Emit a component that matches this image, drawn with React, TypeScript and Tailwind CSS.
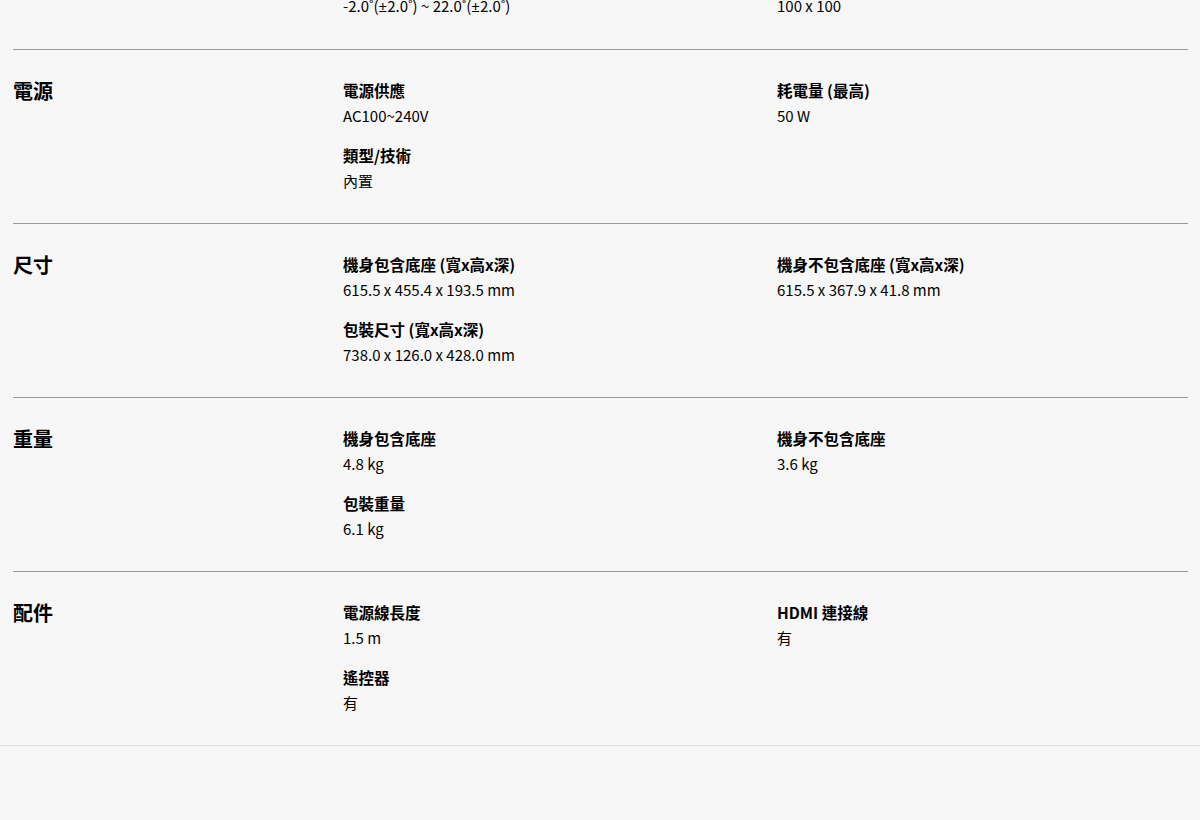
type Item = { label: string; value: string };
type Section = { title: string; items: Item[] };

const SECTIONS: Section[] = [
  {
    title: '電源',
    items: [
      { label: '電源供應', value: 'AC100~240V' },
      { label: '耗電量 (最高)', value: '50 W' },
      { label: '類型/技術', value: '內置' },
    ],
  },
  {
    title: '尺寸',
    items: [
      { label: '機身包含底座 (寬x高x深)', value: '615.5 x 455.4 x 193.5 mm' },
      { label: '機身不包含底座 (寬x高x深)', value: '615.5 x 367.9 x 41.8 mm' },
      { label: '包裝尺寸 (寬x高x深)', value: '738.0 x 126.0 x 428.0 mm' },
    ],
  },
  {
    title: '重量',
    items: [
      { label: '機身包含底座', value: '4.8 kg' },
      { label: '機身不包含底座', value: '3.6 kg' },
      { label: '包裝重量', value: '6.1 kg' },
    ],
  },
  {
    title: '配件',
    items: [
      { label: '電源線長度', value: '1.5 m' },
      { label: 'HDMI 連接線', value: '有' },
      { label: '遙控器', value: '有' },
    ],
  },
];

const font = "font-['Noto_Sans_CJK_TC','Noto_Sans',sans-serif]";
const pm = "font-['Noto_Sans',sans-serif]";

function SpecSection({ section, last }: { section: Section; last: boolean }) {
  return (
    <div className={`flex pt-[28px] pb-[30px] ${last ? '' : 'border-b border-[#999]'}`}>
      <h3 className="w-[330px] shrink-0 text-[20px] leading-[25px] font-bold text-black">
        {section.title}
      </h3>
      <div className="grid flex-1 grid-cols-[434px_1fr] gap-y-[15px]">
        {section.items.map((item) => (
          <div key={item.label}>
            <p className="text-[15.5px] leading-[25px] font-bold text-black">{item.label}</p>
            <p className="text-[15px] leading-[25px] text-black">{item.value}</p>
          </div>
        ))}
      </div>
    </div>
  );
}

export default function App() {
  return (
    <div className={`min-h-[820px] w-full bg-[#f7f7f7] ${font}`}>
      <div className="pl-[13px] pr-[12px]">
        <div className="flex border-b border-[#999] pb-[30px]">
          <div className="w-[330px] shrink-0" />
          <div className="-mt-[7px] grid flex-1 grid-cols-[434px_1fr] text-[15px] leading-[25px] text-black">
            <p>
              -2.0˚(<span className={pm}>±</span>2.0˚) ~ 22.0˚(<span className={pm}>±</span>2.0˚)
            </p>
            <p>100 x 100</p>
          </div>
        </div>
        {SECTIONS.map((section, i) => (
          <SpecSection key={section.title} section={section} last={i === SECTIONS.length - 1} />
        ))}
      </div>
      <div className="border-t border-[#ddd]" />
    </div>
  );
}
